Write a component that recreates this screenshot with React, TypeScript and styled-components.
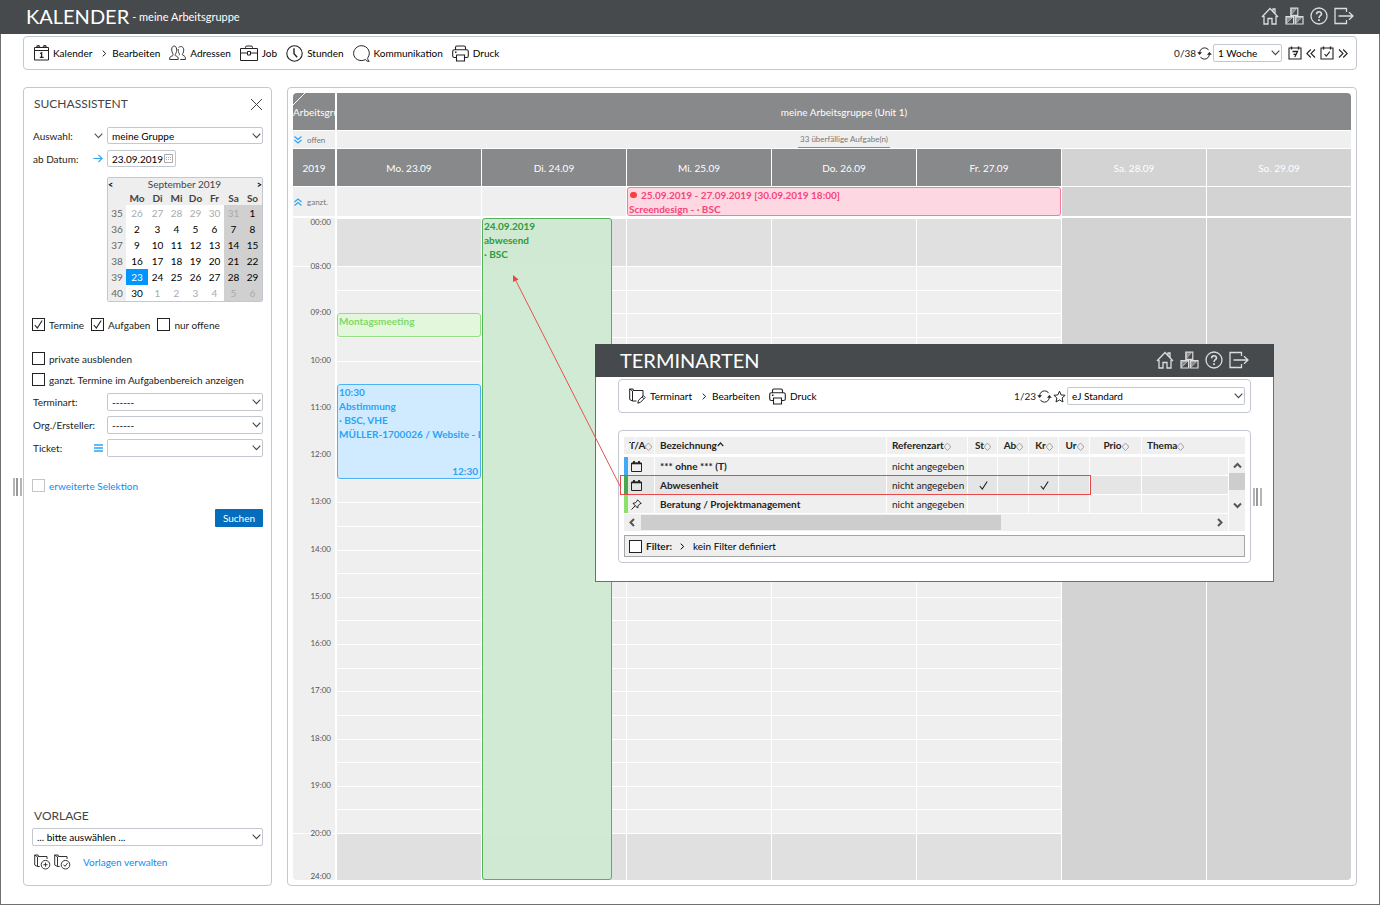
import React from 'react';
import styled, { createGlobalStyle, css } from 'styled-components';

const c = {
  bar: '#474a4c',
  line: '#c3c8d0',
  head: '#88898a',
  cell: '#efefef',
  off: '#e0e0e0',
  weekend: '#d3d3d3',
  link: '#0a8cf5',
  sky: '#2aa5f5',
};

const GlobalStyle = createGlobalStyle`
  *, *::before, *::after { box-sizing: border-box; }
  body { margin: 0; background: #fff; }
  body, button, input, select { font-family: Lato, "Liberation Sans", sans-serif; font-size: 10px; color: #000; }
  button { border: 0; padding: 0; background: none; cursor: pointer; }
  svg { display: block; flex: none; fill: none; stroke: currentColor; }
  h1, h2, p { margin: 0; font-weight: 400; }
`;

/* ---------- icons ---------- */
type IconProps = { w?: number; h?: number; box: string; sw?: number; children: React.ReactNode };
const Svg = ({ w = 16, h = 16, box, sw = 1, children }: IconProps) => (
  <svg width={w} height={h} viewBox={box} strokeWidth={sw} aria-hidden="true">{children}</svg>
);

const HomeIcon = () => (
  <Svg w={18} h={18} box="0 0 18 18" sw={1.3}>
    <path d="M1 10 9 1.5 17 10M3 9v8h4v-5.500h4V17h4V9M14 6.500V2h-2v2.300" />
  </Svg>
);
const BoxesIcon = () => (
  <Svg w={19} h={18} box="0 0 19 18" sw={1.2}>
    <path d="M5.800 1h7v7.300h-7zM1 9.700h7.600V17H1zM10.300 9.700H18V17h-7.700z" />
    <path d="m6.500 7.500 5-6H6.500zM1.600 16.300l6-6h-6zM11 16.300l6-6h-6z" fill="currentColor" fillOpacity=".45" strokeWidth=".6" />
  </Svg>
);
const HelpIcon = () => (
  <Svg w={18} h={18} box="0 0 18 18" sw={1.3}>
    <circle cx="9" cy="9" r="8" />
    <path d="M6.600 7.200c0-3.200 4.900-3.200 4.900-.3C11.500 8.800 9 8.700 9 11" strokeWidth="1.600" />
    <path d="M9 12.200v1.700" strokeWidth="1.800" />
  </Svg>
);
const ExitIcon = () => (
  <Svg w={20} h={18} box="0 0 20 18" sw={1.3}>
    <path d="M12.500 5V1.500H1v15h11.500V13M4.500 9H19M15 5.200 19 9l-4 3.800" />
  </Svg>
);
const CalendarDayIcon = () => (
  <Svg w={15} h={16} box="0 0 15 16">
    <path d="M.500 2.500h14v12.500H.500zM.500 5.500h14" />
    <path d="M2.800 1.800a1.400 1 0 0 1 2.800 0M9.400 1.800a1.400 1 0 0 1 2.800 0" strokeWidth="1.400" />
    <path d="M6 8.500 7.600 7.700V12.300M5.800 12.400h3.800" strokeWidth="1.300" />
  </Svg>
);
const PeopleIcon = () => (
  <Svg w={17} h={16} box="0 0 17 16" sw={0.900}>
    <path d="M.600 14.500h8.600c.2-2.500-.6-3-2.700-3.700-.6-.4-.4-1.300.1-2 .9-1.300 1.200-3.200 1-4.800C7.300 0 2.900 0 2.700 4c-.1 1.700.2 3 1 4.500.5 1 .5 2-.2 2.300-2.200.8-3 1.200-2.900 3.700z" />
    <path d="M9.500 2.600c2.400-2.400 5.500-.5 5.200 2.600 0 1.500-.3 2.400-.9 3.300-.5.900-.4 1.500.2 1.800 1.700.6 2.500 1.200 2.400 4.200h-5.200M9.300 4c-.2 2 .1 3.500.9 4.600.4.800.3 1.300-.2 1.700" />
  </Svg>
);
const CaseIcon = () => (
  <Svg w={18} h={16} box="0 0 18 16">
    <path d="M.500 3.500h17v12H.500zM5.500 3.500V2.300Q5.500 1 7 1h4q1.500 0 1.500 1.300v1.200M.500 8h7M10.500 8h7M7.500 6.500h3V10h-3z" />
  </Svg>
);
const ClockIcon = () => (
  <Svg w={17} h={17} box="0 0 17 17" sw={1.100}>
    <circle cx="8.500" cy="8.500" r="7.700" />
    <path d="M8 3.300v5.500l3.200 3.500" strokeWidth="1.400" />
  </Svg>
);
const BubbleIcon = () => (
  <Svg w={17} h={17} box="0 0 17 17">
    <path d="M16.300 16.300c-2 .2-3.200-.6-3.700-1.800-6 3-12-.8-12-6C.600 4.500 4 .700 8.500.700c6.500 0 10 7 6.300 12-.3 1.500.2 2.700 1.500 3.600z" />
  </Svg>
);
const PrinterIcon = () => (
  <Svg w={17} h={17} box="0 0 17 17" sw={1.100}>
    <path d="M3.500 4.500V2.500q0-1.500 1.500-1.500h7q1.500 0 1.500 1.500v2M4 12.500H2.500Q.700 12.500.700 11V6.500q0-1.800 1.800-1.800h12q1.800 0 1.800 1.800V11q0 1.500-1.800 1.500H13M4.500 10h8v6h-8z" />
    <path d="M3 7.300h1.500" strokeWidth="1.400" />
  </Svg>
);
const RefreshIcon = () => (
  <Svg w={15} h={13} box="0 0 15 13">
    <path d="M2.600 6C2.700 2.800 5 .900 7.500.900c1.800 0 3.300.9 4.200 2.300M12.400 7c-.1 3.200-2.400 5.100-4.900 5.100-1.800 0-3.300-.9-4.200-2.300" />
    <path d="M.200 5.200h4.800L2.600 8zM10 7.800h4.800L12.400 5z" fill="currentColor" stroke="none" />
  </Svg>
);
const StarIcon = () => (
  <Svg w={13} h={13} box="0 0 13 13">
    <path d="m6.500 1.200 1.600 3.700 4 .4-3 2.700.9 4-3.500-2.100L3 12l.9-4-3-2.700 4-.4z" />
  </Svg>
);
const MiniCalendar = ({ check }: { check?: boolean }) => (
  <Svg w={14} h={14} box="0 0 14 14" sw={1.100}>
    <path d="M1 2h12v11H1z" />
    <path d="M3.500.500v3M10.500.500v3" strokeWidth="1.400" />
    {check ? <path d="m4.500 8 1.800 2.200 3.500-4.500" /> : <path d="M4.500 5.500h5L6.800 11M5.500 8.300h3" strokeWidth="1.300" />}
  </Svg>
);
const DoubleAngle = ({ left }: { left?: boolean }) => (
  <Svg w={10} h={9} box="0 0 10 9" sw={1.100}>
    {left ? <path d="m4.800.500-4 4 4 4m4.200-8-4 4 4 4" /> : <path d="m1 .500 4 4-4 4m4.200-8 4 4-4 4" />}
  </Svg>
);
const AngleIcon = () => (
  <Svg w={5} h={7} box="0 0 5 7"><path d="m.700.700 3 2.800-3 2.800" /></Svg>
);
const ChevronDown = () => (
  <Svg w={9} h={6} box="0 0 9 6" sw={1.100}><path d="m.700.700 3.800 4 3.800-4" /></Svg>
);
const CloseIcon = () => (
  <Svg w={13} h={13} box="0 0 13 13"><path d="m1 1 11 11M12 1 1 12" /></Svg>
);
const ArrowRight = () => (
  <Svg w={10} h={9} box="0 0 10 9" sw={1.200}><path d="M.300 4.500H9M5.500.800 9 4.500 5.500 8.200" /></Svg>
);
const ListIcon = () => (
  <Svg w={9} h={8} box="0 0 9 8" sw={1.500}><path d="M0 1h9M0 4h9M0 7h9" /></Svg>
);
const DateIcon = () => (
  <Svg w={9} h={9} box="0 0 9 9"><path d="M.500.500h8v8h-8z" /><path d="M2 3.500h5M2 5.500h5" strokeDasharray="1 1" /></Svg>
);
const FoldIcon = ({ up }: { up?: boolean }) => (
  <Svg w={8} h={8} box="0 0 8 8" sw={1.200}>
    {up ? <path d="m.500 4 3.500-3 3.500 3m-7 3.500 3.500-3 3.500 3" /> : <path d="m.500.500 3.500 3 3.500-3m-7 3.500 3.500 3 3.500-3" />}
  </Svg>
);
const FolderIcon = ({ badge }: { badge: 'plus' | 'check' | 'pen' }) => (
  <Svg w={17} h={16} box="0 0 17 16">
    <path d={badge === 'pen' ? 'M7.500 13H3.500L.700 11.500V1h3.500v1.500H14V8M3.500 13V3L.700 1' : 'M5.800 12.500H3.500L.700 11V1h3.500v1.500H13V5M3.500 12.500V3L.700 1'} />
    {badge === 'pen' && <path d="m8.800 15.200.8-3 4.800-4.500 1.800 1.800-4.800 4.900zM13.200 9l1.600 1.700" />}
    {badge !== 'pen' && <circle cx="11.500" cy="10.700" r="4.300" />}
    {badge === 'plus' && <path d="M11.500 8.700v4M9.500 10.700h4" />}
    {badge === 'check' && <path d="m9.500 10.700 1.500 1.600 2.700-3.400" />}
  </Svg>
);
const EventIcon = () => (
  <Svg w={11} h={11} box="0 0 11 11">
    <path d="M.500 2h10v8.500H.500z" /><path d="M1 2.500h9" strokeWidth="1.600" /><path d="M3 0v3M8 0v3" strokeWidth="1.800" />
  </Svg>
);
const PinIcon = () => (
  <Svg w={11} h={11} box="0 0 11 11">
    <path d="m6.500.800 3.700 3.700-1.300.3L7 6.900l-.3 2.200L2 4.300l2.200-.4 2-1.900zM4.200 6.800.5 10.500" />
  </Svg>
);
const CheckMark = () => (
  <Svg w={9} h={9} box="0 0 9 9" sw={1.100}><path d="m.800 5 2.500 3L8.200.500" /></Svg>
);
const SortIcon = () => (
  <Svg w={7} h={9} box="0 0 7 9" sw={0.900}><path d="M.700 4 3.500 1l2.800 3v1.600L3.500 8.500.700 5.600z" /></Svg>
);
const SortUpIcon = () => (
  <Svg w={7} h={5} box="0 0 7 5" sw={1.200}><path d="m.700 4.200 2.800-3.200 2.800 3.200" /></Svg>
);
const ScrollArrow = ({ d }: { d: string }) => (
  <Svg w={9} h={9} box="0 0 9 9" sw={2}><path d={d} /></Svg>
);

/* ---------- shell ---------- */
const Page = styled.div`
  position: relative;
  display: flex;
  flex-direction: column;
  min-height: 100vh;
  border: solid #6e6f71;
  border-width: 0 1px 1px;
`;
const TitleBar = styled.header<{ $dialog?: boolean }>`
  display: flex;
  align-items: center;
  height: ${p => (p.$dialog ? 33 : 34)}px;
  margin: 0 -1px;
  padding: 0 ${p => (p.$dialog ? 25 : 26)}px 2px;
  background: ${c.bar};
  color: #fff;
`;
const Title = styled.h1`
  font-size: 20px;
  line-height: 24px;
`;
const Subtitle = styled.p`
  margin: 2px 0 0 3px;
  font-size: 11px;
  line-height: 16px;
`;
const TitleActions = styled.nav`
  display: flex;
  align-items: center;
  gap: 6px;
  margin-left: auto;
  color: #dcdcdc;
  button { color: inherit; }
`;
const Frame = styled.div`
  border: 1px solid ${c.line};
  border-radius: 4px;
`;
const Toolbar = styled(Frame)<{ $end: number }>`
  display: flex;
  align-items: center;
  height: 34px;
  margin: 2px 22px 17px;
  padding: 0 ${p => p.$end}px 0 10px;
  color: #222;
`;
const Tools = styled.nav`
  display: flex;
  align-items: center;
  gap: 9px;
`;
const Tool = styled.button`
  display: flex;
  align-items: center;
  gap: 4px;
  height: 20px;
  line-height: 20px;
  svg { color: #222; }
`;
const Separator = styled.span`
  display: flex;
  margin: 0 -4px 0 1px;
`;
const ToolsRight = styled.div`
  display: flex;
  align-items: center;
  gap: 1px;
  margin-left: auto;
`;
const Counter = styled.span`
  line-height: 20px;
`;
const Pager = styled.div`
  display: flex;
  align-items: center;
  gap: 4px;
  margin-left: 5px;
  button { color: #222; }
`;
const Workspace = styled.main`
  display: flex;
  flex: 1;
  gap: 15px;
  padding: 0 22px 18px;
`;

/* ---------- form parts ---------- */
const SelectBox = styled.span<{ $w?: string; $h?: number }>`
  display: grid;
  align-items: center;
  width: ${p => p.$w ?? '156px'};
  height: ${p => p.$h ?? 18}px;
  color: #444;
  select {
    grid-area: 1 / 1;
    appearance: none;
    width: 100%;
    height: 100%;
    padding: 0 12px 0 4px;
    border: 1px solid ${c.line};
    border-radius: 2px;
    background: #fff;
    line-height: 14px;
  }
  svg {
    grid-area: 1 / 1;
    justify-self: end;
    margin-right: 2px;
    pointer-events: none;
  }
`;
const Dropdown = ({ id, label, value, w, h }: { id: string; label?: string; value: string; w?: string; h?: number }) => (
  <SelectBox $w={w} $h={h}>
    <select id={id} aria-label={label} defaultValue={value}><option>{value}</option></select>
    <ChevronDown />
  </SelectBox>
);
const CheckLabel = styled.label<{ $tone?: 'link' | 'bold' }>`
  display: flex;
  align-items: center;
  gap: 4px;
  line-height: 14px;
  color: ${p => (p.$tone === 'link' ? c.link : '#222')};
  font-weight: ${p => (p.$tone === 'bold' ? 700 : 400)};
`;
const Tick = styled.span<{ $pale?: boolean }>`
  display: grid;
  place-items: center;
  color: #222;
  input {
    grid-area: 1 / 1;
    appearance: none;
    width: 13px;
    height: 13px;
    margin: 0;
    border: 1px solid ${p => (p.$pale ? '#c4c4c4' : '#222')};
    background: #fff;
  }
  svg { grid-area: 1 / 1; visibility: hidden; pointer-events: none; }
  input:checked + svg { visibility: visible; }
`;
const Check = ({ text, checked, tone }: { text: string; checked?: boolean; tone?: 'link' | 'bold' }) => (
  <CheckLabel $tone={tone}>
    <Tick $pale={tone === 'link'}><input type="checkbox" defaultChecked={checked} /><CheckMark /></Tick>
    {text}
  </CheckLabel>
);

/* ---------- search panel ---------- */
const Sidebar = styled(Frame).attrs({ as: 'aside' })`
  display: flex;
  flex: none;
  flex-direction: column;
  justify-content: space-between;
  width: 249px;
  padding: 8px 8px 11px;
`;
const SearchForm = styled.form`
  display: flex;
  flex-direction: column;
`;
const PanelHead = styled.div`
  display: flex;
  align-items: center;
  justify-content: space-between;
  height: 16px;
  margin-bottom: 12px;
  button { color: #444; }
`;
const PanelTitle = styled.h2`
  padding-left: 2px;
  font-size: 12px;
  line-height: 16px;
  color: #444;
`;
const Field = styled.div`
  display: flex;
  align-items: center;
  height: 23px;
  label { width: 60px; padding-left: 1px; line-height: 14px; color: #222; }
`;
const FieldMark = styled.span<{ $color?: string }>`
  display: flex;
  justify-content: center;
  width: 12px;
  margin-right: 3px;
  color: ${p => p.$color ?? '#555'};
`;
const DateBox = styled.span`
  display: flex;
  align-items: center;
  width: 69px;
  height: 17px;
  padding: 0 2px 0 4px;
  border: 1px solid ${c.line};
  border-radius: 2px;
  color: #aaa;
  input { flex: 1; min-width: 0; padding: 0; border: 0; background: none; line-height: 14px; }
`;
const MonthTable = styled.table`
  width: 156px;
  margin: 7px 0 15px 75px;
  border: 1px solid ${c.line};
  border-collapse: separate;
  border-spacing: 0;
  border-radius: 2px;
  table-layout: fixed;
  text-align: center;
  th, td { padding: 0; }
  thead { background: #eee; color: #444; }
  thead tr:first-child th { height: 13px; font-weight: 400; line-height: 13px; }
  thead tr:last-child th { height: 14px; line-height: 14px; }
  thead button { display: block; line-height: 13px; margin: 0 auto 0 0; font-size: 9px; font-weight: 700; }
  thead th:last-child button { margin: 0 0 0 auto; }
`;
const WeekNo = styled.th`
  height: 16px;
  background: #eee;
  color: #666;
  font-weight: 400;
  line-height: 16px;
`;
const Day = styled.td<{ $other?: boolean; $weekend?: boolean; $today?: boolean }>`
  line-height: 16px;
  color: ${p => (p.$today ? '#fff' : p.$other ? '#aaa' : '#000')};
  background: ${p => (p.$today ? '#0095ff' : p.$weekend ? '#d0d0d0' : '#fff')};
`;
const CheckGroup = styled.div`
  margin-top: 16px;
`;
const CheckRow = styled.div<{ $h: number }>`
  display: flex;
  align-items: center;
  gap: 7px;
  height: ${p => p.$h}px;
`;
const SearchButton = styled.button`
  align-self: flex-end;
  width: 48px;
  height: 18px;
  margin-top: 13px;
  border-radius: 1px;
  background: #046dbe;
  color: #fff;
  line-height: 18px;
`;
const Template = styled.section`
  display: flex;
  flex-direction: column;
  gap: 4px;
`;
const TemplateActions = styled.div`
  display: flex;
  align-items: center;
  gap: 3px;
  height: 24px;
  padding-left: 2px;
  button { color: #333; }
  a { margin-left: 9px; color: ${c.link}; text-decoration: none; line-height: 16px; }
`;
const Grip = styled.span<{ $x: number; $y: number }>`
  position: absolute;
  left: ${p => p.$x}px;
  top: ${p => p.$y}px;
  width: 9px;
  height: 18px;
  border: solid #b5b5b5;
  border-width: 0 2px;
  &::before { content: ''; display: block; width: 2px; height: 18px; margin-left: 1px; background: #999; }
`;

/* ---------- week planner ---------- */
const Planner = styled(Frame).attrs({ as: 'section' })`
  display: flex;
  flex: 1;
  flex-direction: column;
  gap: 1px;
  min-width: 0;
  padding: 5px;
`;
const Band = styled.div<{ $h: number }>`
  display: flex;
  flex: none;
  gap: 2px;
  height: ${p => p.$h}px;
`;
const Days = styled.div`
  display: grid;
  flex: 1;
  grid-template-columns: repeat(7, minmax(0, 1fr));
  column-gap: 1px;
`;
const headText = css`
  display: flex;
  align-items: center;
  justify-content: center;
  color: #fff;
  white-space: nowrap;
`;
const Gutter = styled.div<{ $head?: boolean; $corner?: boolean }>`
  position: relative;
  flex: none;
  width: 42px;
  overflow: hidden;
  border-top-left-radius: ${p => (p.$corner ? 4 : 0)}px;
  ${p => (p.$head ? headText : css`display: flex; align-items: center; gap: 5px; padding-left: 1px; color: ${c.sky};`)}
  ${p => p.$corner && css`justify-content: flex-start;`}
  background: ${p => (p.$head ? c.head : c.cell)};
`;
const Muted = styled.span`
  color: #777;
  font-size: 8px;
  line-height: 12px;
`;
const CornerCut = styled.svg<{ $x?: number }>`
  position: absolute;
  left: ${p => p.$x ?? 0}px;
  top: 0;
  && { color: #fff; }
`;
const GroupHead = styled.div`
  ${headText}
  flex: 1;
  border-top-right-radius: 4px;
  background: ${c.head};
`;
const OpenTasks = styled.div`
  display: flex;
  flex: 1;
  justify-content: center;
  background: ${c.cell};
  a {
    height: 17px;
    padding: 0 2px;
    border-bottom: 1px solid #888;
    color: #777;
    font-size: 8px;
    line-height: 16px;
    text-decoration: none;
  }
`;
const DayHead = styled.div<{ $weekend?: boolean }>`
  ${headText}
  background: ${p => (p.$weekend ? c.weekend : c.head)};
`;
const Slot = styled.div<{ $bg: string; $col: number; $row: string; $line?: boolean }>`
  grid-column: ${p => p.$col};
  grid-row: ${p => p.$row};
  background: ${p => p.$bg};
  border-top: ${p => (p.$line ? '1px solid #fff' : 0)};
`;
const Schedule = styled.div`
  display: flex;
  flex: 1;
  gap: 2px;
  margin-top: 1px;
  overflow: hidden;
  border-radius: 0 0 4px 4px;
`;
const hourRows = css`
  grid-template-rows: 48px repeat(24, minmax(16px, 1fr)) 47px;
`;
const HourGutter = styled.div`
  display: grid;
  flex: none;
  width: 42px;
  background: ${c.cell};
  ${hourRows}
`;
const Hour = styled.div<{ $row: number; $edge?: 'start' | 'end'; $line?: boolean }>`
  grid-column: 1;
  grid-row: ${p => p.$row};
  align-self: ${p => p.$edge ?? 'start'};
  border-top: ${p => (p.$line ? '1px solid #fff' : 0)};
  span {
    display: block;
    margin: ${p => (p.$edge ? '1px' : '-4px')} 4px 0 0;
    text-align: right;
    color: #555;
    font-size: 8px;
    line-height: 7px;
  }
`;
const ScheduleDays = styled(Days)`
  ${hourRows}
`;
const tones = {
  green: { line: '#54b25c', fill: 'rgba(207, 234, 210, .93)', text: '#2f9a3a' },
  lime: { line: '#93e082', fill: 'rgba(225, 247, 219, .95)', text: '#7fd968' },
  blue: { line: '#4db2f5', fill: 'rgba(206, 234, 255, .97)', text: '#2aa3f5' },
  pink: { line: '#f77a9b', fill: '#fdd8e2', text: '#f8447a' },
};
const Entry = styled.article<{ $tone: keyof typeof tones; $col: string; $row: string; $w?: string }>`
  z-index: 1;
  display: flex;
  flex-direction: column;
  grid-column: ${p => p.$col};
  grid-row: ${p => p.$row};
  width: ${p => p.$w ?? 'auto'};
  min-width: 0;
  padding-left: 1px;
  overflow: hidden;
  border: 1px solid ${p => tones[p.$tone].line};
  border-radius: 3px;
  background: ${p => tones[p.$tone].fill};
  color: ${p => tones[p.$tone].text};
  font-weight: 700;
  line-height: 14px;
  white-space: nowrap;
`;
const EndTime = styled.span`
  margin: auto 2px 0 0;
  text-align: right;
`;
const Alert = styled.span`
  display: inline-block;
  width: 7px;
  height: 6px;
  margin: 0 4px 1px 1px;
  border-radius: 3px;
  background: #f5413f;
`;

/* ---------- dialog ---------- */
const Dialog = styled.section`
  position: absolute;
  z-index: 2;
  left: 594px;
  top: 344px;
  width: 679px;
  border: solid #6e6f71;
  border-width: 0 1px 1px;
  background: #fff;
`;
const ListFrame = styled(Frame)`
  margin: 0 22px 18px;
  padding: 6px 5px 5px;
`;
const Grid = styled.table`
  width: 100%;
  border-collapse: separate;
  border-spacing: 0;
  table-layout: fixed;
  color: #222;
  th, td { padding: 0 0 0 5px; text-align: left; white-space: nowrap; background-clip: padding-box; border-right: 1px solid #fff; }
  th:last-child { border-right: 0; }
  th { height: 20px; border-bottom: 3px solid #fff; background-color: ${c.cell}; line-height: 17px; }
  td { height: 19px; border-bottom: 1px solid #fff; line-height: 18px; }
`;
const Row = styled.tr<{ $mark: string; $active?: boolean }>`
  td { background-color: ${p => (p.$active ? '#e5e5e5' : c.cell)}; }
  td:first-child { box-shadow: inset 4px 0 0 ${p => p.$mark}; padding-left: 7px; }
`;
const HeadCell = styled.span<{ $center?: boolean }>`
  position: relative;
  display: flex;
  align-items: center;
  justify-content: ${p => (p.$center ? 'center' : 'flex-start')};
  padding-right: ${p => (p.$center ? 4 : 0)}px;
`;
const SortMark = styled.span<{ $active?: boolean }>`
  display: flex;
  margin-top: ${p => (p.$active ? -3 : 2)}px;
  color: ${p => (p.$active ? '#222' : '#999')};
`;
const Name = styled.strong`
  font-weight: 700;
`;
const Centered = styled.span`
  display: flex;
  justify-content: center;
  padding-right: 4px;
`;
const ScrollCell = styled.td`
  && { padding: 0; background: ${c.cell}; border: 0; box-shadow: none; vertical-align: top; }
`;
const VScroll = styled.div`
  display: flex;
  flex-direction: column;
  align-items: center;
  height: 57px;
  padding-top: 4px;
  color: #555;
  &::after { content: ''; order: 1; width: 100%; height: 17px; margin: 3px 0 11px; background: #cdcdcd; }
  svg:last-of-type { order: 2; }
`;
const HScroll = styled.div`
  display: flex;
  align-items: center;
  height: 17px;
  padding-left: 4px;
  margin-right: 17px;
  background: ${c.cell};
  color: #555;
  &::before { content: ''; order: 1; flex: none; width: 60%; height: 15px; margin-left: 4px; background: #cdcdcd; }
  svg:last-of-type { order: 2; margin: 0 4px 0 auto; }
`;
const ScrollFoot = styled.div`
  background: linear-gradient(to left, ${c.cell} 16px, #fff 16px);
`;
const FilterBar = styled.div`
  display: flex;
  align-items: center;
  gap: 8px;
  height: 22px;
  margin-top: 4px;
  padding: 0 4px;
  border: 1px solid #a5a5a5;
  background: ${c.cell};
`;
const Highlight = styled.span`
  position: absolute;
  left: 24px;
  top: 131px;
  width: 471px;
  height: 20px;
  border: 1px solid #e8484a;
  pointer-events: none;
`;
const Pointer = styled.svg`
  position: absolute;
  left: -86px;
  top: -71px;
  color: #e0564e;
  pointer-events: none;
`;

/* ---------- data ---------- */
const weekdays = ['Mo', 'Di', 'Mi', 'Do', 'Fr', 'Sa', 'So'];
const weeks = Array.from({ length: 6 }, (_, w) => ({
  no: 35 + w,
  days: weekdays.map((_, d) => {
    const n = w * 7 + d - 5;
    return { n: n < 1 ? n + 31 : n > 30 ? n - 30 : n, other: n < 1 || n > 30, weekend: d > 4, today: n === 23 };
  }),
}));
const dates = ['Mo. 23.09', 'Di. 24.09', 'Mi. 25.09', 'Do. 26.09', 'Fr. 27.09', 'Sa. 28.09', 'So. 29.09'];
const hours = Array.from({ length: 13 }, (_, i) => i + 8);
const columns = [
  { label: 'T/A', w: 31 }, { label: 'Bezeichnung', w: 232 }, { label: 'Referenzart', w: 81 },
  { label: 'St', w: 30, center: true }, { label: 'Ab', w: 31, center: true }, { label: 'Kr', w: 30, center: true },
  { label: 'Ur', w: 31, center: true }, { label: 'Prio', w: 52, center: true }, { label: 'Thema', w: 0 },
];
const rows = [
  { name: '*** ohne *** (T)', mark: '#42aaf5', icon: <EventIcon />, ticks: false },
  { name: 'Abwesenheit', mark: '#47a94c', icon: <EventIcon />, ticks: true },
  { name: 'Beratung / Projektmanagement', mark: '#8ce06c', icon: <PinIcon />, ticks: false },
];

const HeaderActions = () => (
  <TitleActions>
    <button aria-label="Start"><HomeIcon /></button>
    <button aria-label="Module"><BoxesIcon /></button>
    <button aria-label="Hilfe"><HelpIcon /></button>
    <button aria-label="Abmelden"><ExitIcon /></button>
  </TitleActions>
);
const Cut = ({ x }: { x?: number }) => (
  <CornerCut $x={x} width="12" height="12" viewBox="0 0 12 12"><path d="M0 12 12 0" /></CornerCut>
);

const SearchPanel = () => (
  <Sidebar>
    <SearchForm onSubmit={e => e.preventDefault()}>
      <PanelHead>
        <PanelTitle>SUCHASSISTENT</PanelTitle>
        <button type="button" aria-label="Schließen"><CloseIcon /></button>
      </PanelHead>
      <Field>
        <label htmlFor="auswahl">Auswahl:</label>
        <FieldMark><ChevronDown /></FieldMark>
        <Dropdown id="auswahl" value="meine Gruppe" h={17} />
      </Field>
      <Field>
        <label htmlFor="datum">ab Datum:</label>
        <FieldMark $color={c.sky}><ArrowRight /></FieldMark>
        <DateBox><input id="datum" defaultValue="23.09.2019" /><DateIcon /></DateBox>
      </Field>
      <MonthTable>
        <colgroup><col width="18" /><col width="22" />{weekdays.slice(1).map(d => <col key={d} />)}</colgroup>
        <thead>
          <tr>
            <th><button type="button" aria-label="Voriger Monat">&lt;</button></th>
            <th colSpan={6}>September 2019</th>
            <th><button type="button" aria-label="Nächster Monat">&gt;</button></th>
          </tr>
          <tr><th />{weekdays.map(d => <th key={d}>{d}</th>)}</tr>
        </thead>
        <tbody>
          {weeks.map(w => (
            <tr key={w.no}>
              <WeekNo>{w.no}</WeekNo>
              {w.days.map((d, i) => <Day key={i} $other={d.other} $weekend={d.weekend} $today={d.today}>{d.n}</Day>)}
            </tr>
          ))}
        </tbody>
      </MonthTable>
      <CheckRow $h={15}>
        <Check text="Termine" checked />
        <Check text="Aufgaben" checked />
        <Check text="nur offene" />
      </CheckRow>
      <CheckGroup>
        <CheckRow $h={21}><Check text="private ausblenden" /></CheckRow>
        <CheckRow $h={21}><Check text="ganzt. Termine im Aufgabenbereich anzeigen" /></CheckRow>
      </CheckGroup>
      <Field><label htmlFor="art">Terminart:</label><FieldMark /><Dropdown id="art" value="------" /></Field>
      <Field><label htmlFor="org">Org./Ersteller:</label><FieldMark /><Dropdown id="org" value="------" /></Field>
      <Field>
        <label htmlFor="ticket">Ticket:</label>
        <FieldMark $color={c.sky}><ListIcon /></FieldMark>
        <Dropdown id="ticket" value="" />
      </Field>
      <CheckGroup>
        <CheckRow $h={21}><Check text="erweiterte Selektion" tone="link" /></CheckRow>
      </CheckGroup>
      <SearchButton>Suchen</SearchButton>
    </SearchForm>
    <Template>
      <PanelTitle>VORLAGE</PanelTitle>
      <Dropdown id="vorlage" label="Vorlage" value="... bitte auswählen ..." w="100%" />
      <TemplateActions>
        <button aria-label="Vorlage anlegen"><FolderIcon badge="plus" /></button>
        <button aria-label="Vorlage übernehmen"><FolderIcon badge="check" /></button>
        <a href="#vorlagen">Vorlagen verwalten</a>
      </TemplateActions>
    </Template>
  </Sidebar>
);

const WeekPlanner = () => (
  <Planner>
    <Band $h={37}>
      <Gutter $head $corner><Cut />Arbeitsgruppe</Gutter>
      <GroupHead>meine Arbeitsgruppe (Unit 1)</GroupHead>
    </Band>
    <Band $h={17}>
      <Gutter><FoldIcon /><Muted>offen</Muted></Gutter>
      <OpenTasks><a href="#aufgaben">33 überfällige Aufgabe(n)</a></OpenTasks>
    </Band>
    <Band $h={37}>
      <Gutter $head>2019</Gutter>
      <Days>{dates.map((d, i) => <DayHead key={d} $weekend={i > 4}>{d}</DayHead>)}</Days>
    </Band>
    <Band $h={29}>
      <Gutter><FoldIcon up /><Muted>ganzt.</Muted></Gutter>
      <Days>
        {dates.map((d, i) => <Slot key={d} $col={i + 1} $row="1" $bg={i > 4 ? c.weekend : c.cell} />)}
        <Entry $tone="pink" $col="3 / 6" $row="1">
          <span><Alert />25.09.2019 - 27.09.2019 [30.09.2019 18:00]</span>
          <span>Screendesign - · BSC</span>
        </Entry>
      </Days>
    </Band>
    <Schedule>
      <HourGutter>
        <Hour $row={1} $edge="start"><span>00:00</span></Hour>
        {hours.map(h => (
          <Hour key={h} $row={(h - 8) * 2 + 2} $line={h === 8 || h === 20}>
            <span>{String(h).padStart(2, '0')}:00</span>
          </Hour>
        ))}
        <Hour $row={26} $edge="end"><span>24:00</span></Hour>
      </HourGutter>
      <ScheduleDays>
        {[1, 2, 3, 4, 5].flatMap(col =>
          Array.from({ length: 26 }, (_, r) => (
            <Slot key={`${col}-${r}`} $col={col} $row={String(r + 1)} $line $bg={r === 0 || r === 25 ? c.off : c.cell} />
          )),
        )}
        <Slot $col={6} $row="1 / -1" $bg={c.weekend} />
        <Slot $col={7} $row="1 / -1" $bg={c.weekend} />
        <Entry $tone="green" $col="2" $row="1 / -1" $w="90%">
          <span>24.09.2019</span><span>abwesend</span><span>· BSC</span>
        </Entry>
        <Entry $tone="lime" $col="1" $row="4"><span>Montagsmeeting</span></Entry>
        <Entry $tone="blue" $col="1" $row="7 / 11">
          <span>10:30</span><span>Abstimmung</span><span>· BSC, VHE</span>
          <span>MÜLLER-1700026 / Website - L</span>
          <EndTime>12:30</EndTime>
        </Entry>
      </ScheduleDays>
    </Schedule>
  </Planner>
);

const TypesDialog = () => (
  <Dialog aria-label="Terminarten">
    <TitleBar $dialog><Title>TERMINARTEN</Title><HeaderActions /></TitleBar>
    <Toolbar $end={5}>
      <Tools>
        <Tool><FolderIcon badge="pen" />Terminart</Tool>
        <Separator><AngleIcon /></Separator>
        <Tool>Bearbeiten</Tool>
        <Tool><PrinterIcon />Druck</Tool>
      </Tools>
      <ToolsRight>
        <Counter>1/23</Counter>
        <RefreshIcon />
        <StarIcon />
        <Dropdown id="ansicht" label="Ansicht" value="eJ Standard" w="178px" />
      </ToolsRight>
    </Toolbar>
    <ListFrame>
      <Grid>
        <colgroup>{columns.map(k => <col key={k.label} width={k.w || undefined} />)}<col width="16" /></colgroup>
        <thead>
          <tr>
            {columns.map((k, i) => (
              <th key={k.label} colSpan={i === 8 ? 2 : 1}>
                <HeadCell $center={k.center}>
                  {k.label}
                  <SortMark $active={i === 1}>{i === 1 ? <SortUpIcon /> : <SortIcon />}</SortMark>
                  {i === 0 && <Cut x={-4} />}
                </HeadCell>
              </th>
            ))}
          </tr>
        </thead>
        <tbody>
          {rows.map((r, i) => (
            <Row key={r.name} $mark={r.mark} $active={r.ticks}>
              <td>{r.icon}</td>
              <td><Name>{r.name}</Name></td>
              <td>nicht angegeben</td>
              {['St', 'Ab', 'Kr', 'Ur', 'Prio', 'Thema'].map(k => (
                <td key={k}>{r.ticks && (k === 'St' || k === 'Kr') && <Centered><CheckMark /></Centered>}</td>
              ))}
              {i === 0 && (
                <ScrollCell rowSpan={3}>
                  <VScroll><ScrollArrow d="m1 6.500 3.500-3.500L8 6.500" /><ScrollArrow d="m1 2.500 3.500 3.500L8 2.500" /></VScroll>
                </ScrollCell>
              )}
            </Row>
          ))}
        </tbody>
      </Grid>
      <ScrollFoot>
        <HScroll><ScrollArrow d="M6 1 2.500 4.500 6 8" /><ScrollArrow d="m3 1 3.500 3.500L3 8" /></HScroll>
      </ScrollFoot>
      <FilterBar>
        <Check text="Filter:" tone="bold" />
        <AngleIcon />
        <span>kein Filter definiert</span>
      </FilterBar>
    </ListFrame>
    <Grip $x={657} $y={144} />
    <Highlight />
    <Pointer width="112" height="216" viewBox="0 0 112 216">
      <path d="M111 215 5 6" />
      <path d="m3 2 5.500 4.500L3 9z" fill="#e8484a" stroke="none" />
    </Pointer>
  </Dialog>
);

export default function App() {
  return (
    <Page>
      <GlobalStyle />
      <TitleBar>
        <Title>KALENDER</Title>
        <Subtitle>- meine Arbeitsgruppe</Subtitle>
        <HeaderActions />
      </TitleBar>
      <Toolbar $end={8}>
        <Tools>
          <Tool><CalendarDayIcon />Kalender</Tool>
          <Separator><AngleIcon /></Separator>
          <Tool>Bearbeiten</Tool>
          <Tool><PeopleIcon />Adressen</Tool>
          <Tool><CaseIcon />Job</Tool>
          <Tool><ClockIcon />Stunden</Tool>
          <Tool><BubbleIcon />Kommunikation</Tool>
          <Tool><PrinterIcon />Druck</Tool>
        </Tools>
        <ToolsRight>
          <Counter>0/38</Counter>
          <RefreshIcon />
          <Dropdown id="zeitraum" label="Zeitraum" value="1 Woche" w="69px" />
          <Pager>
            <button aria-label="Heute"><MiniCalendar /></button>
            <button aria-label="Zurück"><DoubleAngle left /></button>
            <button aria-label="Datum wählen"><MiniCalendar check /></button>
            <button aria-label="Vor"><DoubleAngle /></button>
          </Pager>
        </ToolsRight>
      </Toolbar>
      <Workspace>
        <SearchPanel />
        <WeekPlanner />
      </Workspace>
      <Grip $x={12} $y={478} />
      <TypesDialog />
    </Page>
  );
}
